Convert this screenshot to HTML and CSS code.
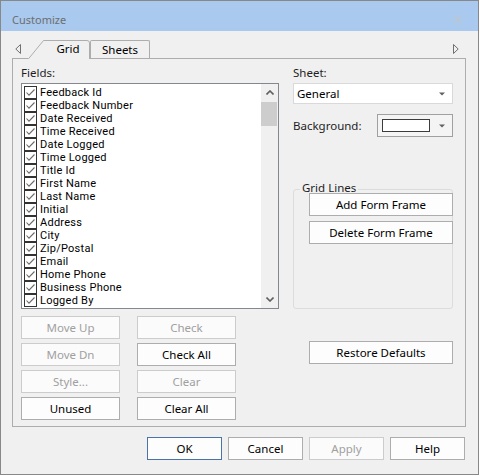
FILE: index.html
```html
<!DOCTYPE html>
<html>
<head>
<meta charset="utf-8">
<link rel="stylesheet" href="styles.css">
</head>
<body>
<div class="window">
  <div class="titlebar">
    <span class="title">Customize</span>
    <svg class="close" width="9" height="9" viewBox="0 0 9 9"><path d="M0.5 0.5 L8.5 8.5 M8.5 0.5 L0.5 8.5" stroke="#bcc5d0" stroke-width="1.1"/></svg>
  </div>
  <div class="client">
    <div class="tabstrip">
      <svg class="arrow-l" width="6" height="10" viewBox="0 0 6 10"><path d="M5.5 0.5 L0.8 5 L5.5 9.5 Z" fill="none" stroke="#707070"/></svg>
      <div class="tabs">
        <div class="tab tab-active">
          <svg class="tab-shape" width="62" height="19" viewBox="0 0 62 19"><path d="M0 19 L15.5 0.5 H59 Q61.5 0.5 61.5 3 V19 Z" fill="#f0f0f0"/><path d="M0.5 18.8 L15.5 0.5 H59 Q61.5 0.5 61.5 3 V19" fill="none" stroke="#adadad"/></svg>
          <span class="tab-text">Grid</span>
        </div>
        <div class="tab tab-other">Sheets</div>
      </div>
      <svg class="arrow-r" width="6" height="10" viewBox="0 0 6 10"><path d="M0.5 0.5 L5.2 5 L0.5 9.5 Z" fill="none" stroke="#707070"/></svg>
    </div>
    <div class="panel">
      <div class="col-left">
        <div class="label">Fields:</div>
        <div class="listbox">
          <div class="items">
            <div class="item"><svg class="cb" width="13" height="13" viewBox="0 0 13 13"><rect x="0.5" y="0.5" width="12" height="12" fill="#fff" stroke="#333"/><path d="M2.5 6.5 L5 9.2 L10.5 3.5" fill="none" stroke="#6a6a6a" stroke-width="1.1"/></svg><span>Feedback Id</span></div>
            <div class="item"><svg class="cb" width="13" height="13" viewBox="0 0 13 13"><rect x="0.5" y="0.5" width="12" height="12" fill="#fff" stroke="#333"/><path d="M2.5 6.5 L5 9.2 L10.5 3.5" fill="none" stroke="#6a6a6a" stroke-width="1.1"/></svg><span>Feedback Number</span></div>
            <div class="item"><svg class="cb" width="13" height="13" viewBox="0 0 13 13"><rect x="0.5" y="0.5" width="12" height="12" fill="#fff" stroke="#333"/><path d="M2.5 6.5 L5 9.2 L10.5 3.5" fill="none" stroke="#6a6a6a" stroke-width="1.1"/></svg><span>Date Received</span></div>
            <div class="item"><svg class="cb" width="13" height="13" viewBox="0 0 13 13"><rect x="0.5" y="0.5" width="12" height="12" fill="#fff" stroke="#333"/><path d="M2.5 6.5 L5 9.2 L10.5 3.5" fill="none" stroke="#6a6a6a" stroke-width="1.1"/></svg><span>Time Received</span></div>
            <div class="item"><svg class="cb" width="13" height="13" viewBox="0 0 13 13"><rect x="0.5" y="0.5" width="12" height="12" fill="#fff" stroke="#333"/><path d="M2.5 6.5 L5 9.2 L10.5 3.5" fill="none" stroke="#6a6a6a" stroke-width="1.1"/></svg><span>Date Logged</span></div>
            <div class="item"><svg class="cb" width="13" height="13" viewBox="0 0 13 13"><rect x="0.5" y="0.5" width="12" height="12" fill="#fff" stroke="#333"/><path d="M2.5 6.5 L5 9.2 L10.5 3.5" fill="none" stroke="#6a6a6a" stroke-width="1.1"/></svg><span>Time Logged</span></div>
            <div class="item"><svg class="cb" width="13" height="13" viewBox="0 0 13 13"><rect x="0.5" y="0.5" width="12" height="12" fill="#fff" stroke="#333"/><path d="M2.5 6.5 L5 9.2 L10.5 3.5" fill="none" stroke="#6a6a6a" stroke-width="1.1"/></svg><span>Title Id</span></div>
            <div class="item"><svg class="cb" width="13" height="13" viewBox="0 0 13 13"><rect x="0.5" y="0.5" width="12" height="12" fill="#fff" stroke="#333"/><path d="M2.5 6.5 L5 9.2 L10.5 3.5" fill="none" stroke="#6a6a6a" stroke-width="1.1"/></svg><span>First Name</span></div>
            <div class="item"><svg class="cb" width="13" height="13" viewBox="0 0 13 13"><rect x="0.5" y="0.5" width="12" height="12" fill="#fff" stroke="#333"/><path d="M2.5 6.5 L5 9.2 L10.5 3.5" fill="none" stroke="#6a6a6a" stroke-width="1.1"/></svg><span>Last Name</span></div>
            <div class="item"><svg class="cb" width="13" height="13" viewBox="0 0 13 13"><rect x="0.5" y="0.5" width="12" height="12" fill="#fff" stroke="#333"/><path d="M2.5 6.5 L5 9.2 L10.5 3.5" fill="none" stroke="#6a6a6a" stroke-width="1.1"/></svg><span>Initial</span></div>
            <div class="item"><svg class="cb" width="13" height="13" viewBox="0 0 13 13"><rect x="0.5" y="0.5" width="12" height="12" fill="#fff" stroke="#333"/><path d="M2.5 6.5 L5 9.2 L10.5 3.5" fill="none" stroke="#6a6a6a" stroke-width="1.1"/></svg><span>Address</span></div>
            <div class="item"><svg class="cb" width="13" height="13" viewBox="0 0 13 13"><rect x="0.5" y="0.5" width="12" height="12" fill="#fff" stroke="#333"/><path d="M2.5 6.5 L5 9.2 L10.5 3.5" fill="none" stroke="#6a6a6a" stroke-width="1.1"/></svg><span>City</span></div>
            <div class="item"><svg class="cb" width="13" height="13" viewBox="0 0 13 13"><rect x="0.5" y="0.5" width="12" height="12" fill="#fff" stroke="#333"/><path d="M2.5 6.5 L5 9.2 L10.5 3.5" fill="none" stroke="#6a6a6a" stroke-width="1.1"/></svg><span>Zip/Postal</span></div>
            <div class="item"><svg class="cb" width="13" height="13" viewBox="0 0 13 13"><rect x="0.5" y="0.5" width="12" height="12" fill="#fff" stroke="#333"/><path d="M2.5 6.5 L5 9.2 L10.5 3.5" fill="none" stroke="#6a6a6a" stroke-width="1.1"/></svg><span>Email</span></div>
            <div class="item"><svg class="cb" width="13" height="13" viewBox="0 0 13 13"><rect x="0.5" y="0.5" width="12" height="12" fill="#fff" stroke="#333"/><path d="M2.5 6.5 L5 9.2 L10.5 3.5" fill="none" stroke="#6a6a6a" stroke-width="1.1"/></svg><span>Home Phone</span></div>
            <div class="item"><svg class="cb" width="13" height="13" viewBox="0 0 13 13"><rect x="0.5" y="0.5" width="12" height="12" fill="#fff" stroke="#333"/><path d="M2.5 6.5 L5 9.2 L10.5 3.5" fill="none" stroke="#6a6a6a" stroke-width="1.1"/></svg><span>Business Phone</span></div>
            <div class="item"><svg class="cb" width="13" height="13" viewBox="0 0 13 13"><rect x="0.5" y="0.5" width="12" height="12" fill="#fff" stroke="#333"/><path d="M2.5 6.5 L5 9.2 L10.5 3.5" fill="none" stroke="#6a6a6a" stroke-width="1.1"/></svg><span>Logged By</span></div>
          </div>
          <div class="scrollbar">
            <div class="sb-btn"><svg width="8" height="5" viewBox="0 0 8 5"><path d="M0.5 4.5 L4 1 L7.5 4.5" fill="none" stroke="#606060" stroke-width="1.6"/></svg></div>
            <div class="thumb"></div>
            <div class="track"></div>
            <div class="sb-btn"><svg width="8" height="5" viewBox="0 0 8 5"><path d="M0.5 0.5 L4 4 L7.5 0.5" fill="none" stroke="#606060" stroke-width="1.6"/></svg></div>
          </div>
        </div>
        <div class="btn-grid">
          <button class="btn disabled">Move Up</button>
          <button class="btn disabled">Check</button>
          <button class="btn disabled">Move Dn</button>
          <button class="btn">Check All</button>
          <button class="btn disabled">Style...</button>
          <button class="btn disabled">Clear</button>
          <button class="btn">Unused</button>
          <button class="btn">Clear All</button>
        </div>
      </div>
      <div class="col-right">
        <div class="label">Sheet:</div>
        <div class="combo">
          <span>General</span>
          <svg width="6" height="4" viewBox="0 0 6 4"><path d="M0 0.5 H6 L3 3.5 Z" fill="#606060"/></svg>
        </div>
        <div class="bg-row">
          <span class="label-inline">Background:</span>
          <div class="color-combo">
            <span class="swatch"></span>
            <svg width="6" height="4" viewBox="0 0 6 4"><path d="M0 0.5 H6 L3 3.5 Z" fill="#606060"/></svg>
          </div>
        </div>
        <div class="group">
          <span class="group-label">Grid Lines</span>
          <button class="btn group-btn">Add Form Frame</button>
          <button class="btn group-btn">Delete Form Frame</button>
        </div>
        <button class="btn restore">Restore Defaults</button>
      </div>
    </div>
    <div class="footer">
      <button class="btn fbtn default">OK</button>
      <button class="btn fbtn">Cancel</button>
      <button class="btn fbtn disabled">Apply</button>
      <button class="btn fbtn">Help</button>
    </div>
  </div>
</div>
</body>
</html>
```
FILE: styles.css
```css
* { box-sizing: border-box; }
html, body { margin: 0; padding: 0; }
body {
  width: 480px;
  height: 476px;
  overflow: hidden;
  background: #ffffff;
  font-family: "Noto Sans", "Open Sans", sans-serif;
  font-size: 11.5px;
  color: #000;
}
.window {
  width: 479px;
  height: 475px;
  border: 1px solid #888888;
  background: #f0f0f0;
  display: flex;
  flex-direction: column;
}
.titlebar {
  height: 30px;
  flex: none;
  background: #a9c9ee;
  display: flex;
  align-items: center;
  justify-content: space-between;
  padding: 7px 16px 0 11px;
}
.title {
  color: #6e6e6e;
  font-size: 11px;
  line-height: 16px;
}
.close { display: block; }
.client {
  flex: 1;
  display: flex;
  flex-direction: column;
  padding: 9px 12px 0 11px;
}
.tabstrip {
  height: 18px;
  display: flex;
  align-items: flex-end;
}
.arrow-l { align-self: flex-start; margin: 4px 0 0 3px; display: block; }
.arrow-r { align-self: flex-start; margin: 4px 7px 0 auto; display: block; }
.tabs {
  display: flex;
  align-items: flex-start;
  margin-left: 7px;
  height: 18px;
}
.tab { line-height: 17px; text-align: center; }
.tab-active {
  position: relative;
  z-index: 2;
  width: 62px;
  height: 19px;
  margin-bottom: -1px;
}
.tab-shape { position: absolute; left: 0; top: 0; display: block; }
.tab-text {
  position: relative;
  display: block;
  padding-left: 18px;
  line-height: 18px;
}
.tab-other {
  width: 60px;
  height: 18px;
  border: 1px solid #adadad;
  border-bottom: none;
  border-radius: 2px 2px 0 0;
  background: #f0f0f0;
}
.panel {
  height: 369px;
  border: 1px solid #adadad;
  display: grid;
  grid-template-columns: 258px 160px;
  column-gap: 14px;
  align-items: start;
  padding: 6px 12px 0 8px;
}
.label {
  height: 16px;
  line-height: 16px;
  margin-bottom: 2px;
  color: #1e1e1e;
}
.listbox {
  height: 226px;
  border: 1px solid #828790;
  background: #fff;
  display: flex;
}
.items {
  flex: 1;
  padding: 2px 0 0 2px;
  overflow: hidden;
}
.item {
  height: 13px;
  display: flex;
  align-items: center;
  gap: 3px;
  font-family: Roboto, "Noto Sans", sans-serif;
  font-size: 11px;
  letter-spacing: 0.25px;
  line-height: 13px;
  white-space: nowrap;
}
.cb { display: block; flex: none; }
.scrollbar {
  width: 17px;
  background: #f0f0f0;
  display: flex;
  flex-direction: column;
}
.sb-btn {
  height: 17px;
  display: flex;
  align-items: center;
  justify-content: center;
}
.sb-btn svg { display: block; }
.thumb {
  height: 24px;
  margin: 1px 1px 0 0;
  background: #cdcdcd;
}
.track { flex: 1; }
.btn {
  font-family: inherit;
  font-size: inherit;
  color: #000;
  background: #fdfdfd;
  border: 1px solid #adadad;
  height: 23px;
  padding: 0;
  margin: 0;
  line-height: 21px;
  text-align: center;
  border-radius: 0;
}
.btn.disabled {
  color: #a0a0a0;
  border-color: #cccccc;
  background: #fbfbfb;
}
.btn-grid {
  margin-top: 7px;
  display: grid;
  grid-template-columns: 99px 99px;
  grid-auto-rows: 23px;
  column-gap: 17px;
  row-gap: 4px;
}
.combo {
  height: 21px;
  border: 1px solid #d9d9d9;
  background: #fff;
  display: flex;
  align-items: center;
  justify-content: space-between;
  padding: 0 7px 0 3px;
}
.combo svg, .color-combo svg { display: block; }
.bg-row {
  margin-top: 10px;
  height: 23px;
  display: flex;
  align-items: center;
  justify-content: space-between;
}
.label-inline { color: #1e1e1e; line-height: 16px; }
.color-combo {
  width: 76px;
  height: 23px;
  border: 1px solid #a0a0a0;
  background: #f4f4f4;
  display: flex;
  align-items: center;
  justify-content: space-between;
  padding: 0 7px 0 4px;
}
.swatch {
  width: 48px;
  height: 13px;
  border: 1px solid #3c3c3c;
  background: #fff;
}
.group {
  position: relative;
  margin-top: 52px;
  height: 120px;
  border: 1px solid #dcdcdc;
  border-radius: 3px;
  padding: 3px 0 0 15px;
  display: flex;
  flex-direction: column;
  gap: 5px;
}
.group-label {
  position: absolute;
  left: 6px;
  top: -10px;
  padding: 0 2px;
  line-height: 16px;
  background: #f0f0f0;
  color: #1e1e1e;
}
.group-btn {
  position: relative;
  margin-right: -1px;
}
.restore {
  display: block;
  margin: 32px 0 0 16px;
  width: 144px;
}
.footer {
  margin: 10px 1px 0 0;
  display: flex;
  justify-content: flex-end;
  gap: 6px;
}
.fbtn { width: 75px; }
.fbtn.default { border-color: #4a74a8; }
```
